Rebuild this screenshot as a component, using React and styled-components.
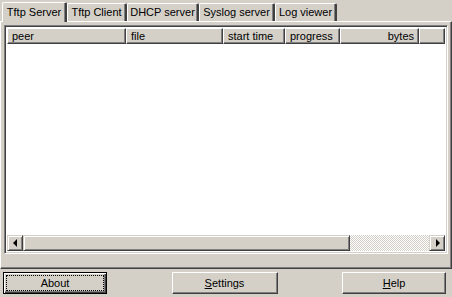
import React from 'react';
import styled, { createGlobalStyle } from 'styled-components';

const GlobalStyle = createGlobalStyle`
    html, body {
        margin: 0;
        padding: 0;
        background: #d4d0c8;
    }
    body {
        font-family: "Liberation Sans", Arial, sans-serif;
        font-size: 11px;
        color: #000;
    }
`;

const Window = styled.div`
    width: 452px;
    height: 297px;
    display: flex;
    flex-direction: column;
    background: #d4d0c8;
    overflow: hidden;
`;

const TabStrip = styled.div`
    display: flex;
    align-items: flex-end;
    height: 21px;
    padding-left: 2px;
    position: relative;
    z-index: 1;
`;

const Tab = styled.div`
    box-sizing: border-box;
    width: ${props => props.w}px;
    height: ${props => (props.active ? '20px' : '18px')};
    margin-bottom: ${props => (props.active ? '-1px' : '0')};
    padding-top: ${props => (props.active ? '3px' : '2px')};
    text-align: center;
    background: #d4d0c8;
    border-top: 1px solid #fff;
    border-left: 1px solid #fff;
    border-right: 2px solid;
    border-right-color: #404040;
    box-shadow: inset -1px 0 0 #808080;
    border-radius: 2px 2px 0 0;
    white-space: nowrap;
    line-height: 13px;
`;

const Panel = styled.div`
    box-sizing: border-box;
    height: 248px;
    border-top: 1px solid #fff;
    border-left: 1px solid #fff;
    border-right: 1px solid #404040;
    border-bottom: 1px solid #404040;
    box-shadow: inset -1px -1px 0 #808080;
    padding: 3px 3px 14px 3px;
    display: flex;
`;

const ListView = styled.div`
    flex: 1;
    display: flex;
    flex-direction: column;
    background: #fff;
    border-top: 1px solid #808080;
    border-left: 1px solid #808080;
    border-right: 1px solid #fff;
    border-bottom: 1px solid #fff;
    box-shadow: inset 1px 1px 0 #404040, inset -1px -1px 0 #d4d0c8;
    padding: 2px;
`;

const Header = styled.div`
    display: flex;
    height: 16px;
`;

const HeaderCell = styled.div`
    box-sizing: border-box;
    width: ${props => props.w}px;
    flex: ${props => (props.fill ? '1' : 'none')};
    background: #d4d0c8;
    border-top: 1px solid #fff;
    border-left: 1px solid #fff;
    border-right: 1px solid #404040;
    border-bottom: 1px solid #404040;
    box-shadow: inset -1px -1px 0 #808080;
    padding: 0 ${props => (props.right ? '4px' : '0')} 0 ${props => (props.right ? '0' : '4px')};
    text-align: ${props => (props.right ? 'right' : 'left')};
    line-height: 14px;
    white-space: nowrap;
    overflow: hidden;
`;

const Rows = styled.div`
    flex: 1;
`;

const HScroll = styled.div`
    display: flex;
    height: 16px;
`;

const ScrollButton = styled.div`
    box-sizing: border-box;
    width: 16px;
    height: 16px;
    background: #d4d0c8;
    border-top: 1px solid #d4d0c8;
    border-left: 1px solid #d4d0c8;
    border-right: 1px solid #404040;
    border-bottom: 1px solid #404040;
    box-shadow: inset 1px 1px 0 #fff, inset -1px -1px 0 #808080;
    display: flex;
    align-items: center;
    justify-content: center;
`;

const Thumb = styled(ScrollButton)`
    width: ${props => props.w}px;
`;

const Track = styled.div`
    flex: 1;
    background-color: #fff;
    background-image: repeating-conic-gradient(#d4d0c8 0 25%, #fff 0 50%);
    background-size: 2px 2px;
`;

const Arrow = styled.div`
    width: 0;
    height: 0;
    border-top: 4px solid transparent;
    border-bottom: 4px solid transparent;
    ${props =>
        props.left
            ? 'border-right: 4px solid #000; margin-left: -1px;'
            : 'border-left: 4px solid #000; margin-left: 1px;'}
`;

const ButtonRow = styled.div`
    display: flex;
    justify-content: space-between;
    padding: 3px 6px 0 3px;
`;

const Button = styled.div`
    box-sizing: border-box;
    width: ${props => props.w}px;
    height: 22px;
    background: #d4d0c8;
    border: 1px solid;
    border-color: ${props =>
        props.isDefault ? '#000' : '#fff #404040 #404040 #fff'};
    box-shadow: ${props =>
        props.isDefault
            ? 'inset 1px 1px 0 #fff, inset -1px -1px 0 #404040, inset -2px -2px 0 #808080'
            : 'inset -1px -1px 0 #808080'};
    display: flex;
    align-items: center;
    justify-content: center;
    padding: 3px;
`;

const Focus = styled.div`
    align-self: stretch;
    flex: 1;
    display: flex;
    align-items: center;
    justify-content: center;
    outline: ${props => (props.on ? '1px dotted #000' : 'none')};
    outline-offset: 0;
`;

const columns = [
    { label: 'peer', w: 119 },
    { label: 'file', w: 97 },
    { label: 'start time', w: 62 },
    { label: 'progress', w: 55 },
    { label: 'bytes', w: 79, right: true },
];

const tabs = [
    { label: 'Tftp Server', w: 65 },
    { label: 'Tftp Client', w: 60 },
    { label: 'DHCP server', w: 72 },
    { label: 'Syslog server', w: 76 },
    { label: 'Log viewer', w: 62 },
];

const App = () => (
    <Window>
        <GlobalStyle />
        <TabStrip>
            {tabs.map((t, i) => (
                <Tab key={t.label} w={t.w} active={i === 0}>
                    {t.label}
                </Tab>
            ))}
        </TabStrip>
        <Panel>
            <ListView>
                <Header>
                    {columns.map(c => (
                        <HeaderCell key={c.label} w={c.w} right={c.right}>
                            {c.label}
                        </HeaderCell>
                    ))}
                    <HeaderCell fill />
                </Header>
                <Rows />
                <HScroll>
                    <ScrollButton>
                        <Arrow left />
                    </ScrollButton>
                    <Thumb w={327} />
                    <Track />
                    <ScrollButton>
                        <Arrow />
                    </ScrollButton>
                </HScroll>
            </ListView>
        </Panel>
        <ButtonRow>
            <Button w={104} isDefault>
                <Focus on>About</Focus>
            </Button>
            <Button w={106}>
                <Focus>
                    <span>
                        <u>S</u>ettings
                    </span>
                </Focus>
            </Button>
            <Button w={104}>
                <Focus>
                    <span>
                        <u>H</u>elp
                    </span>
                </Focus>
            </Button>
        </ButtonRow>
    </Window>
);

export default App;
